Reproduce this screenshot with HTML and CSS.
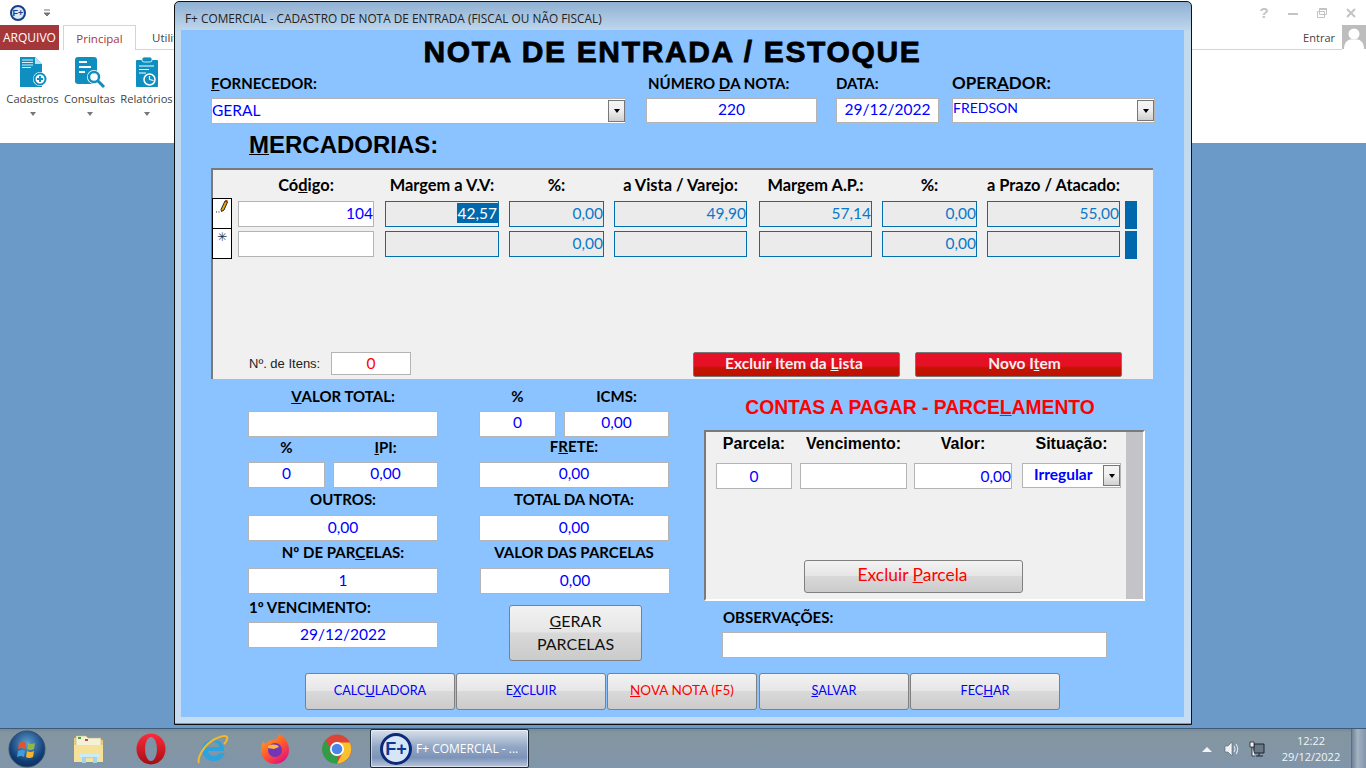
FILE: index.html
```html
<!DOCTYPE html>
<html lang="pt-BR">
<head>
<meta charset="utf-8">
<title>F+ Comercial</title>
<link rel="stylesheet" href="styles.css">
</head>
<body>
<div class="screen">
  <header class="ribbon">
    <div class="qat">
      <span class="logo-sm">F+</span>
      <svg class="qat-arrow" width="9" height="8" viewBox="0 0 9 8"><path d="M1 1h6M1 4h6v0L4 7z" fill="#777" stroke="#777"/></svg>
      <div class="winctl">
        <span class="help">?</span>
        <svg width="12" height="12" viewBox="0 0 12 12"><path d="M1 7h10" stroke="#c4c4c4" stroke-width="2"/></svg>
        <svg width="12" height="12" viewBox="0 0 12 12"><path d="M3.5 1.5h7v6h-7zM1.5 4.5h7v6h-7z" fill="#fff" stroke="#c4c4c4"/><path d="M3.5 2h7" stroke="#c4c4c4" stroke-width="2"/></svg>
        <svg width="12" height="12" viewBox="0 0 12 12"><path d="M2 2l8 8M10 2l-8 8" stroke="#c4c4c4" stroke-width="2"/></svg>
      </div>
    </div>
    <div class="tabs">
      <span class="tab-file">ARQUIVO</span>
      <span class="tab-active">Principal</span>
      <span class="tab">Utilitários</span>
      <span class="tabs-fill"></span>
      <span class="signin">Entrar</span>
      <svg class="avatar" width="24" height="24" viewBox="0 0 24 24"><rect width="24" height="24" fill="#bdbdbd"/><circle cx="12" cy="9" r="5.5" fill="#fff"/><path d="M2 24c0-7 4-9 6-9.500h8c2 .5 6 2.500 6 9.500z" fill="#fff"/></svg>
    </div>
    <div class="tools">
      <div class="tool">
        <svg width="30" height="32" viewBox="0 0 30 32"><path d="M2 1h15l7 7v23H2z" fill="#0f8fc0"/><path d="M17 1l7 7h-7z" fill="#bfe0ee"/><path d="M4 4h11M4 6.500h11M4 9h11M4 11.500h9" stroke="#d5edf6" stroke-width="1.200"/><circle cx="22" cy="23" r="7" fill="#fff"/><circle cx="22" cy="23" r="5.500" fill="#fff" stroke="#0f8fc0" stroke-width="2"/><path d="M19 23h6M22 20v6" stroke="#0f8fc0" stroke-width="2"/></svg>
        <span>Cadastros</span>
        <i class="caret"></i>
      </div>
      <div class="tool">
        <svg width="32" height="32" viewBox="0 0 32 32"><rect x="1" y="1" width="22" height="27" rx="3" fill="#0f8fc0"/><path d="M5 6h8M5 11h12M5 16h6" stroke="#fff" stroke-width="2"/><circle cx="20" cy="21" r="7" fill="#fff"/><circle cx="20" cy="21" r="5" fill="#fff" stroke="#0f8fc0" stroke-width="2.500"/><path d="M24 25l6 6" stroke="#0f8fc0" stroke-width="3"/></svg>
        <span>Consultas</span>
        <i class="caret"></i>
      </div>
      <div class="tool">
        <svg width="26" height="32" viewBox="0 0 26 32"><rect x="2" y="4" width="22" height="27" rx="1" fill="#0f8fc0"/><rect x="8" y="1" width="10" height="5" rx="2" fill="#0f8fc0" stroke="#fff" stroke-width=".8"/><path d="M5 10h15M5 13.500h10M5 17h7" stroke="#fff" stroke-width="1.200"/><circle cx="15.500" cy="23.500" r="5.500" fill="#0f8fc0" stroke="#fff" stroke-width="1.500"/><path d="M15.500 23.500V20M15.500 23.500l4 1" stroke="#fff" stroke-width="1.200"/></svg>
        <span>Relatórios</span>
        <i class="caret"></i>
      </div>
    </div>
  </header>

  <main class="desktop"></main>

  <footer class="taskbar">
    <svg class="orb" width="38" height="38" viewBox="0 0 38 38">
      <defs><radialGradient id="orbg" cx=".5" cy=".35" r=".7"><stop offset="0" stop-color="#5f9fd0"/><stop offset=".7" stop-color="#123f78"/><stop offset="1" stop-color="#0c2a50"/></radialGradient></defs>
      <circle cx="19" cy="19" r="18" fill="url(#orbg)" stroke="#35506c"/>
      <path d="M11 13q4-2 7 0l-1 6q-3-2-7 0z" fill="#e2552b"/><path d="M20 13q3 2 7 0l-1 6q-4 2-7 0z" fill="#8fb844"/><path d="M10 21q4-2 7 0l-1 6q-3-2-7 0z" fill="#3b9fdc"/><path d="M19 21q3 2 7 0l-1 6q-4 2-7 0z" fill="#f4b52c"/>
    </svg>
    <div class="pin">
      <svg width="32" height="30" viewBox="0 0 32 30"><path d="M1 4h13l2 2h14v22H1z" fill="#e9cf7c"/><path d="M3 2h10l2 2h13v8H3z" fill="#f4f1d8" stroke="#c8b468" stroke-width=".6"/><path d="M5 3h3v2H5z" fill="#4aa34a"/><path d="M12 5h3v2h-3z" fill="#c84a3a"/><path d="M1 11h29v17H1z" fill="#f6e19a"/><path d="M9 29v-9h15v9h-4v-5h-7v5z" fill="#9fd5ee"/><path d="M7 20h19v3H7z" fill="#c8ecf8"/></svg>
    </div>
    <div class="pin">
      <svg width="30" height="32" viewBox="0 0 30 32"><defs><linearGradient id="opg" x1="0" y1="0" x2="0" y2="1"><stop offset="0" stop-color="#ff2a3a"/><stop offset="1" stop-color="#a40e14"/></linearGradient></defs><ellipse cx="15" cy="16" rx="14.500" ry="15.500" fill="url(#opg)"/><ellipse cx="15" cy="16" rx="6" ry="12" fill="#7d93a8"/></svg>
    </div>
    <div class="pin">
      <svg width="32" height="32" viewBox="0 0 32 32"><path d="M5 17a11 10 0 0 1 22-1v2H11q1 5 6 5 4 0 6-3h5q-3 8-11 8C10 28 5 23 5 17zm6-3h11q-1-5-5.500-5T11 14z" fill="#2aa3df"/><path d="M2 30C0 26 6 12 18 6c6-3 11-4 12-2 1 3-3 7-3 7" fill="none" stroke="#f2b92d" stroke-width="2"/></svg>
    </div>
    <div class="pin">
      <svg width="30" height="32" viewBox="0 0 30 32"><defs><linearGradient id="ffg" x1="0" y1="0" x2=".7" y2="1"><stop offset="0" stop-color="#ffb020"/><stop offset=".55" stop-color="#ff5a2c"/><stop offset="1" stop-color="#e4127a"/></linearGradient></defs><path d="M19 1c6 3 10 9 10 16a14 14 0 0 1-28 0c0-4 1-7 3-9 0 2 1 3 2 3 1-3 5-4 8-4 2 0 4-3 5-6z" fill="url(#ffg)"/><circle cx="15" cy="17" r="7" fill="#7234b8"/><path d="M8 13c4-2 9-2 11 1l-5 2-6-1z" fill="#ffb43c"/></svg>
    </div>
    <div class="pin">
      <svg width="30" height="30" viewBox="0 0 30 30"><circle cx="15" cy="15" r="14.500" fill="#db4437"/><path d="M15 15L2 22.500A14.500 14.500 0 0 0 15 29.500z" fill="#2f9e48"/><path d="M2 22.500A14.500 14.500 0 0 1 3.500 6L10 17z" fill="#2f9e48"/><path d="M15 8.500h12.800A14.500 14.500 0 0 1 15 29.500L21 18z" fill="#fbc02d"/><circle cx="15" cy="15" r="7" fill="#fff"/><circle cx="15" cy="15" r="5.300" fill="#4a86e8"/></svg>
    </div>
    <div class="task">
      <span class="logo-lg">F+</span>
      <span class="task-name">F+ COMERCIAL - ...</span>
    </div>
    <div class="tray">
      <svg class="tray-arrow" width="10" height="6" viewBox="0 0 10 6"><path d="M0 6l5-5 5 5z" fill="#f2f5f8"/></svg>
      <svg width="16" height="16" viewBox="0 0 16 16"><path d="M1 5h3l4-4v14l-4-4H1z" fill="#eef2f5" stroke="#55636f" stroke-width=".6"/><path d="M10 5q2 3 0 6M12 3q3.500 5 0 10" fill="none" stroke="#dde5ec" stroke-width="1.100"/></svg>
      <svg width="16" height="16" viewBox="0 0 16 16"><path d="M5 3h10v9H5z" fill="#6a7886" stroke="#1c2530"/><path d="M7 15h7M10 12v3" stroke="#1c2530"/><path d="M1 1h4v5H1zM3 6v9h3" fill="#f3f3f3" stroke="#1c2530" stroke-width=".8"/></svg>
      <div class="clock"><span>12:22</span><span>29/12/2022</span></div>
    </div>
    <div class="show-desktop"></div>
  </footer>

  <section class="window">
    <div class="win-title">F+ COMERCIAL - CADASTRO DE NOTA DE ENTRADA (FISCAL OU NÃO FISCAL)</div>
    <form class="form">
      <h1 class="main-title">NOTA DE ENTRADA / ESTOQUE</h1>

      <div class="head-grid">
        <label class="lb lb-left lb-head"><u>F</u>ORNECEDOR:</label>
        <label class="lb lb-left lb-head lb-n">NÚMERO <u>D</u>A NOTA:</label>
        <label class="lb lb-left lb-head">DATA:</label>
        <label class="lb lb-left lb-head lb-op">OPER<u>A</u>DOR:</label>
        <div class="fld combo f-forn"><span class="combo-text">GERAL</span><span class="drop"></span></div>
        <div class="fld center f-high f-num">220</div>
        <div class="fld center f-high f-date">29/12/2022</div>
        <div class="fld combo f-high f-op"><span class="combo-text">FREDSON</span><span class="drop"></span></div>
      </div>

      <h2 class="merc"><u>M</u>ERCADORIAS:</h2>

      <div class="panel">
        <div class="grid-row grid-head">
          <span></span>
          <span>Có<u>d</u>igo:</span>
          <span>Margem a V.V:</span>
          <span>%:</span>
          <span>a Vista / Varejo:</span>
          <span>Margem A.P.:</span>
          <span>%:</span>
          <span>a Prazo / Atacado:</span>
          <span></span>
        </div>
        <div class="grid-row">
          <span class="sel sel-a"><svg width="13" height="15" viewBox="0 0 13 15"><path d="M5 10.500L9 2l2.500 1-3.500 8-2.500 1.500z" fill="#e8a800" stroke="#111" stroke-width=".9"/><path d="M9 2l.6-1.200 2.400 1-.5 1.200z" fill="#b02020"/><path d="M0 13h1M2.500 13h1" stroke="#222"/></svg></span>
          <div class="fld right">104</div>
          <div class="cell right"><span class="hl">42,57</span></div>
          <div class="cell right">0,00</div>
          <div class="cell right">49,90</div>
          <div class="cell right">57,14</div>
          <div class="cell right">0,00</div>
          <div class="cell right">55,00</div>
          <span class="mark"></span>
        </div>
        <div class="grid-row row-2">
          <span class="sel sel-b">✳</span>
          <div class="fld right"></div>
          <div class="cell right"></div>
          <div class="cell right">0,00</div>
          <div class="cell right"></div>
          <div class="cell right"></div>
          <div class="cell right">0,00</div>
          <div class="cell right"></div>
          <span class="mark"></span>
        </div>
        <div class="panel-foot">
          <span class="items-lb">Nº. de Itens:</span>
          <div class="fld center items-f">0</div>
          <button type="button" class="btn-red btn-first">Excluir Item da <u>L</u>ista</button>
          <button type="button" class="btn-red btn-second">Novo I<u>t</u>em</button>
        </div>
      </div>

      <div class="lower">
        <div class="col col-left">
          <label class="lb"><u>V</u>ALOR TOTAL:</label>
          <div class="fld"></div>
          <div class="pair lb-pair"><label class="lb">%</label><label class="lb"><u>I</u>PI:</label></div>
          <div class="pair f-up"><div class="fld center">0</div><div class="fld center">0,00</div></div>
          <label class="lb lb-hi">OUTROS:</label>
          <div class="fld center">0,00</div>
          <label class="lb lb-hi">Nº DE PAR<u>C</u>ELAS:</label>
          <div class="fld center">1</div>
          <label class="lb lb-left lb-venc">1º VENCIMENTO:</label>
          <div class="fld center">29/12/2022</div>
        </div>
        <div class="col col-mid">
          <div class="pair lb-pair"><label class="lb">%</label><label class="lb">ICMS:</label></div>
          <div class="pair f-up"><div class="fld center">0</div><div class="fld center">0,00</div></div>
          <label class="lb lb-hi">F<u>R</u>ETE:</label>
          <div class="fld center f-up2">0,00</div>
          <label class="lb lb-hi">TOTAL DA NOTA:</label>
          <div class="fld center">0,00</div>
          <label class="lb lb-hi">VALOR DAS PARCELAS</label>
          <div class="fld center shift">0,00</div>
          <span></span>
          <button type="button" class="btn btn-gerar"><span><u>G</u>ERAR</span><span>PARCELAS</span></button>
        </div>
        <div class="col-right">
          <h3 class="contas">CONTAS A PAGAR - PARCE<u>L</u>AMENTO</h3>
          <div class="sub">
            <div class="sub-main">
              <div class="sub-grid sub-head">
                <span>Parcela:</span><span>Vencimento:</span><span>Valor:</span><span>Situação:</span>
              </div>
              <div class="sub-grid">
                <div class="fld center f-down">0</div>
                <div class="fld"></div>
                <div class="fld right f-down">0,00</div>
                <div class="fld combo sit"><span class="combo-text sit-text">Irregular</span><span class="drop"></span></div>
              </div>
              <button type="button" class="btn btn-parcela">Excluir <u>P</u>arcela</button>
            </div>
            <div class="scroll"></div>
          </div>
          <label class="lb lb-left lb-obs">OBSERVAÇÕES:</label>
          <div class="fld obs"></div>
        </div>
      </div>

      <div class="actions">
        <button type="button" class="btn btn-act">CALC<u>U</u>LADORA</button>
        <button type="button" class="btn btn-act">E<u>X</u>CLUIR</button>
        <button type="button" class="btn btn-act btn-warn"><u>N</u>OVA NOTA (F5)</button>
        <button type="button" class="btn btn-act btn-gap"><u>S</u>ALVAR</button>
        <button type="button" class="btn btn-act">FEC<u>H</u>AR</button>
      </div>
    </form>
  </section>
</div>
</body>
</html>
```
FILE: styles.css
```css
* { box-sizing: border-box; }
html, body { margin: 0; padding: 0; }
body { width: 1366px; height: 768px; overflow: hidden; font-family: "Lato", "Liberation Sans", sans-serif; }
.screen { position: relative; width: 1366px; height: 768px; display: flex; flex-direction: column; background: #6b9ac8; }

/* Ribbon */
.ribbon { height: 143px; background: #fff; display: flex; flex-direction: column; font-family: "Open Sans", sans-serif; color: #444; flex: none; }
.qat { height: 25px; display: flex; align-items: center; padding-left: 10px; }
.logo-sm { width: 16px; height: 16px; border-radius: 50%; border: 2px solid #173f8f; background: #dbe9f8; color: #173f8f; font: bold 9px/12px "Liberation Sans", sans-serif; text-align: center; }
.qat-arrow { margin-left: 17px; }
.winctl { margin-left: auto; display: flex; align-items: center; gap: 17px; padding-right: 9px; }
.help { width: 12px; font: bold 15px/16px "Liberation Sans", sans-serif; color: #c4c4c4; text-align: center; }
.tabs { height: 25px; display: flex; align-items: stretch; font-size: 11.500px; }
.tab-file { width: 59px; background: #a4373a; color: #fff; display: flex; align-items: center; justify-content: center; font-size: 12px; }
.tab-active { width: 73px; margin-left: 4px; border: 1px solid #d4d4d4; border-bottom: 0; color: #a4373a; display: flex; align-items: center; justify-content: center; }
.tab { width: 72px; padding-left: 16px; display: flex; align-items: center; border-bottom: 1px solid #d4d4d4; }
.tabs-fill { flex: 1; border-bottom: 1px solid #d4d4d4; }
.signin { display: flex; align-items: center; padding-right: 7px; border-bottom: 1px solid #d4d4d4; font-size: 11px; }
.avatar { display: block; }
.tools { display: flex; padding: 6px 0 0 4px; }
.tool { width: 57px; display: flex; flex-direction: column; align-items: center; font-size: 11.200px; white-space: nowrap; }
.tool svg { height: 32px; display: block; }
.tool span { margin-top: 3px; line-height: 16px; }
.caret { margin-top: 5px; width: 0; height: 0; border: 3.500px solid transparent; border-top: 4px solid #777; border-bottom: 0; }

.desktop { flex: 1; }

/* Taskbar */
.taskbar { height: 40px; flex: none; background: linear-gradient(#75899f, #83969f 10%, #8195ab); border-top: 1px solid #3d5a78; display: flex; align-items: center; position: relative; }
.orb { margin-left: 8px; margin-right: 12px; display: block; }
.pin { width: 62px; display: flex; justify-content: center; align-items: center; }
.task { width: 159px; height: 39px; margin-left: 2px; border: 1px solid #1c2a3a; border-radius: 2px; background: linear-gradient(#d8e1ec, #93a7c4 45%, #7c93b8 75%, #b9c6dc); display: flex; align-items: center; padding-left: 9px; color: #fff; box-shadow: inset 0 0 0 1px rgba(255,255,255,.5); }
.logo-lg { width: 32px; height: 32px; border-radius: 50%; border: 3px solid #0b2a7a; background: #d7e6f6; color: #0b3a96; font: bold 18px/26px "Liberation Sans", sans-serif; text-align: center; flex: none; }
.task-name { margin-left: 4px; white-space: nowrap; font-family: "Open Sans", sans-serif; font-size: 12px; }
.tray { margin-left: auto; display: flex; align-items: center; gap: 9px; }
.tray-arrow { margin-right: 3px; }
.clock { width: 70px; margin-left: 2px; margin-right: 5px; display: flex; flex-direction: column; align-items: center; color: #f0f5fa; font: 11px/16px "Open Sans", sans-serif; }
.show-desktop { width: 15px; height: 39px; background: linear-gradient(90deg, #6f8297, #a4b3c3 40%, #8295a9); border-left: 1px solid #5a6e84; }

/* Window */
.window { position: absolute; left: 174px; top: 1px; width: 1018px; height: 724px; padding: 0 7px 7px 6px; border: 1px solid #111; border-radius: 5px 5px 0 0; background: linear-gradient(#8fb0d2, #c2d9ee 30px, #c5dcf2); box-shadow: inset 0 -1px 0 #27c0d8; }
.win-title { height: 28px; line-height: 33px; font-size: 11.850px; font-family: "Open Sans", sans-serif; color: #222; white-space: nowrap; padding-left: 4px; }
.form { height: 687px; background: #8ac3ff; display: flex; flex-direction: column; }
.main-title { margin: 0; height: 44px; padding-right: 20px; text-align: center; font: bold 30px/44px "Liberation Sans", sans-serif; letter-spacing: 1.650px; color: #000; -webkit-text-stroke: .8px #000; }

.lb { display: flex; align-items: flex-end; justify-content: center; padding-bottom: 5px; font-weight: 700; font-size: 15px; line-height: 20px; color: #000; white-space: pre; }
.lb-left { justify-content: flex-start; }
.lb-head { padding-bottom: 5px; }
.lb-hi { padding-bottom: 6px; }
.lb u, .merc u, .contas u, .btn u, .btn-red u, .grid-head u { text-decoration-thickness: 1px; }

.fld { background: #fff; border: 1px solid #b4b4b4; color: #0000ff; font-size: 15.500px; line-height: 22px; height: 26px; padding: 0 1px; white-space: nowrap; }
.center { text-align: center; }
.right { text-align: right; padding-right: 0; }
.f-up .fld, .f-up2 { line-height: 20px; }
.f-down { line-height: 24px; }
.combo { display: flex; align-items: stretch; padding: 0; }
.combo-text { flex: 1; padding-left: 0; }
.drop { width: 17px; margin: 1px 0; border: 1px solid #777; background: linear-gradient(#f4f4f4, #f0f0f0 45%, #d0d0d0); display: flex; align-items: center; justify-content: center; }
.drop::after { content: ""; width: 0; height: 0; border: 3.500px solid transparent; border-top: 4px solid #000; border-bottom: 0; }

.head-grid { margin-left: 30px; display: grid; grid-template-columns: 435px 190px 116px 203px; grid-template-rows: 24px 26px; }
.lb-n { margin-left: 2px; }
.lb-op { font-size: 17px; }
.f-forn { width: 415px; }
.f-num { width: 171px; height: 25px; line-height: 20px; }
.f-date { width: 103px; height: 25px; line-height: 20px; }
.f-op { height: 25px; font-size: 14px; line-height: 18px; }

.merc { margin: 0; height: 44px; padding-left: 68px; font: bold 24px/42px "Liberation Sans", sans-serif; color: #000; }

.panel { margin-left: 30px; width: 942px; height: 211px; background: #f0f0f0; border-top: 2px solid #7a7a7a; border-left: 2px solid #7a7a7a; display: flex; flex-direction: column; padding-bottom: 2px; }
.grid-row { display: grid; grid-template-columns: 25px 147px 124px 105px 145px 123px 105px 138px 12px; height: 26px; }
.grid-row > .fld { width: 136px; line-height: 22px; }
.grid-head { height: 31px; font-weight: 700; font-size: 16.400px; color: #000; line-height: 30px; text-align: center; white-space: nowrap; }
.grid-head > :nth-child(2) { width: 136px; }
.grid-head > :nth-child(3), .grid-row > .cell:nth-child(3) { width: 114px; }
.grid-head > :nth-child(4), .grid-row > .cell:nth-child(4) { width: 95px; }
.grid-head > :nth-child(5), .grid-row > .cell:nth-child(5) { width: 133px; }
.grid-head > :nth-child(6), .grid-row > .cell:nth-child(6) { width: 113px; }
.grid-head > :nth-child(7), .grid-row > .cell:nth-child(7) { width: 95px; }
.grid-head > :nth-child(8), .grid-row > .cell:nth-child(8) { width: 133px; }
.row-2 { margin-top: 4px; }
.cell { height: 26px; background: #ebebeb; border: 1px solid #0070b0; color: #0a78c8; font-size: 15.500px; line-height: 22px; padding: 0 0 0 1px; }
.hl { display: inline-block; background: #0068ad; color: #fff; line-height: 20px; padding: 0 1px; margin-top: 1px; vertical-align: top; }
.mark { background: #0068ad; }
.sel { width: 20px; margin-left: -1px; border: 1px solid #000; background: #fff; display: flex; align-items: flex-start; justify-content: center; color: #333; font-size: 12px; line-height: 16px; }
.sel-a { height: 31px; margin-top: -3px; }
.sel-b { height: 30px; margin-top: -2px; border-top: 0; font-family: "DejaVu Sans", sans-serif; }
.panel-foot { margin-top: auto; height: 25px; display: flex; align-items: flex-start; }
.items-lb { margin-left: 36px; width: 82px; font: 13px/24px "Liberation Sans", sans-serif; color: #222; white-space: nowrap; }
.items-f { width: 80px; height: 23px; line-height: 21px; color: #f00; }
.btn-red { width: 207px; height: 25px; padding: 0 0 4px; border: 1px solid #777; border-radius: 2px; background: linear-gradient(#e81028, #e41024 55%, #c41400 65%, #c01000); color: #f0f0f0; font: 700 15.500px/20px "Lato", sans-serif; }
.btn-first { margin-left: 282px; padding-right: 5px; }
.btn-second { margin-left: 15px; padding-left: 12px; }

.lower { height: 294px; margin-left: 67px; display: flex; }
.col { display: grid; grid-template-rows: 32px 26px 25px 26px 27px 26px 27px 26px 28px 26px; }
.col-left { width: 190px; }
.col-mid { width: 190px; margin-left: 41px; grid-template-rows: 32px 26px 25px 26px 27px 26px 27px 26px 11px 56px; }
.pair { display: grid; grid-template-columns: 77px 105px; column-gap: 8px; }
.lb-venc { padding-left: 1px; }
.shift { margin: 0 -1px 0 1px; }
.btn { border: 1px solid #808080; border-radius: 3px; background: linear-gradient(#f2f2f2, #e6e6e6 48%, #d9d9d9 50%, #cbcbcb); padding: 0; font-family: "Lato", sans-serif; color: #111; }
.btn-gerar { width: 133px; margin-left: 30px; padding-bottom: 2px; display: flex; flex-direction: column; align-items: center; justify-content: center; font-size: 16px; line-height: 23px; }
.col-right { width: 441px; margin-left: 35px; display: flex; flex-direction: column; }
.contas { margin: 0; height: 51px; padding-right: 9px; text-align: center; color: #f00; font: bold 19.300px/57px "Liberation Sans", sans-serif; white-space: nowrap; }
.sub { height: 171px; display: flex; border-top: 2px solid #7a7a7a; border-left: 2px solid #7a7a7a; border-right: 2px solid #fff; border-bottom: 2px solid #fff; background: #f0f0f0; }
.sub-main { flex: 1; display: flex; flex-direction: column; }
.sub-grid { display: grid; grid-template-columns: 76px 107px 98px 99px; column-gap: 8px; margin-left: 10px; height: 26px; }
.sub-grid > :nth-child(3) { margin-left: -1px; width: 98px; }
.sub-grid > :nth-child(4) { margin-left: 1px; width: 99px; height: 25px; }
.sub-head { height: 31px; font: bold 16px/24px "Liberation Sans", sans-serif; color: #000; text-align: center; white-space: nowrap; }
.sit { font-weight: 700; font-size: 15.500px; line-height: 21px; }
.sit-text { padding-left: 11px; }
.btn-parcela { width: 219px; height: 33px; margin: 71px 0 0 98px; padding: 0 2px 4px 0; color: #f00; font-size: 17.400px; }
.scroll { width: 17px; background: #c4c4c8; }
.lb-obs { height: 31px; margin-left: 19px; padding-bottom: 5px; }
.obs { width: 385px; margin-left: 18px; }

.actions { margin-left: 124px; display: flex; gap: 1px; }
.btn-act { width: 150px; height: 37px; padding-bottom: 3px; color: #0000ff; font-size: 12.700px; }
.btn-warn { color: #f00; font-size: 13.500px; }
.btn-gap { margin-left: 1px; }
```
